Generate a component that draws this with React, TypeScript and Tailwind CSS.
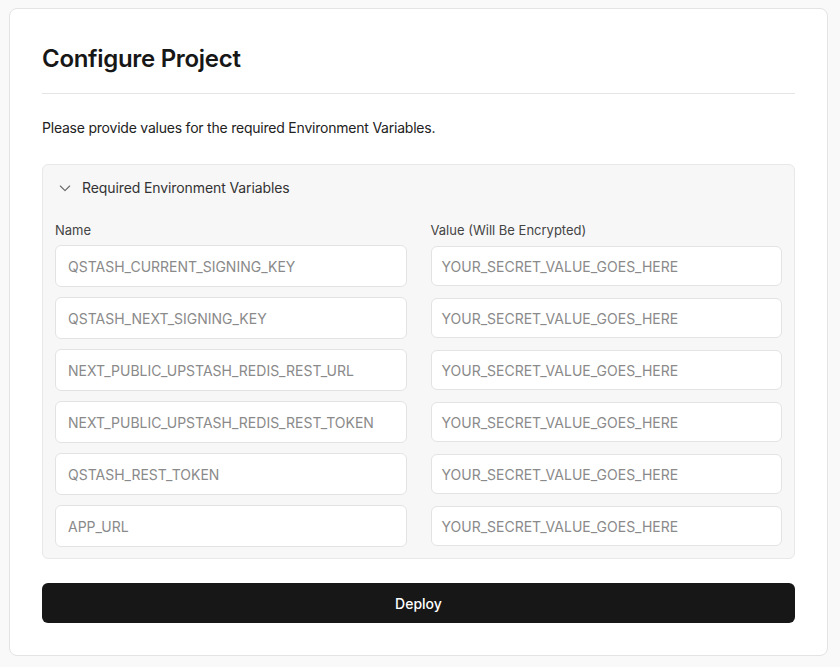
import React from "react";

const names = [
  "QSTASH_CURRENT_SIGNING_KEY",
  "QSTASH_NEXT_SIGNING_KEY",
  "NEXT_PUBLIC_UPSTASH_REDIS_REST_URL",
  "NEXT_PUBLIC_UPSTASH_REDIS_REST_TOKEN",
  "QSTASH_REST_TOKEN",
  "APP_URL",
];

export default function App() {
  return (
    <div
      className="min-h-[667px] w-[840px] bg-[#f9f9f9] pt-2 pl-[9px] pr-[12px] pb-3"
      style={{ fontFamily: "Inter, 'Noto Sans', sans-serif" }}
    >
      <div className="rounded-lg border border-[#e3e3e3] bg-white px-8 pt-[34px] pb-8">
        <h1 className="text-[24px] leading-8 font-semibold text-[#171717] tracking-[-0.3px]">
          Configure Project
        </h1>
        <div className="mt-[18px] border-t border-[#e5e5e5]" />
        <p className="mt-6 text-[14px] leading-5 text-[#222] tracking-[-0.22px]">
          Please provide values for the required Environment Variables.
        </p>
        <div className="mt-[26px] rounded-md border border-[#e8e8e8] bg-[#f7f7f7]">
          <div className="flex items-center gap-[9px] pl-[14px] pr-4 pt-[13px] pb-3">
            <svg width="16" height="16" viewBox="0 0 24 24" fill="none" stroke="#666" strokeWidth="1.6" strokeLinecap="round" strokeLinejoin="round">
              <path d="M5 9l7 7 7-7" />
            </svg>
            <span className="text-[14px] leading-5 text-[#333] tracking-[-0.1px]">Required Environment Variables</span>
          </div>
          <div className="grid grid-cols-2 gap-6 px-3 pb-[11px] pt-3">
            <div className="flex flex-col">
              <div className="text-[13px] leading-4 text-[#444]">Name</div>
              <div className="mt-[7px] flex flex-col gap-[10px]">
                {names.map((n) => (
                  <div
                    key={n}
                    className="flex h-[42px] items-center rounded-md border border-[#e3e3e3] bg-white px-3 text-[14px] text-[#8a8a8a]"
                  >
                    {n}
                  </div>
                ))}
              </div>
            </div>
            <div className="flex flex-col">
              <div className="text-[13px] leading-4 text-[#444]">Value (Will Be Encrypted)</div>
              <div className="mt-[8px] flex flex-col gap-3">
                {names.map((n) => (
                  <div
                    key={n}
                    className="flex h-[40px] items-center rounded-md border border-[#e3e3e3] bg-white px-[10px] text-[14px] text-[#8a8a8a]"
                  >
                    YOUR_SECRET_VALUE_GOES_HERE
                  </div>
                ))}
              </div>
            </div>
          </div>
        </div>
        <button className="mt-6 flex h-10 w-full items-center justify-center rounded-md bg-[#171717] text-[14px] font-medium text-white">
          Deploy
        </button>
      </div>
    </div>
  );
}
